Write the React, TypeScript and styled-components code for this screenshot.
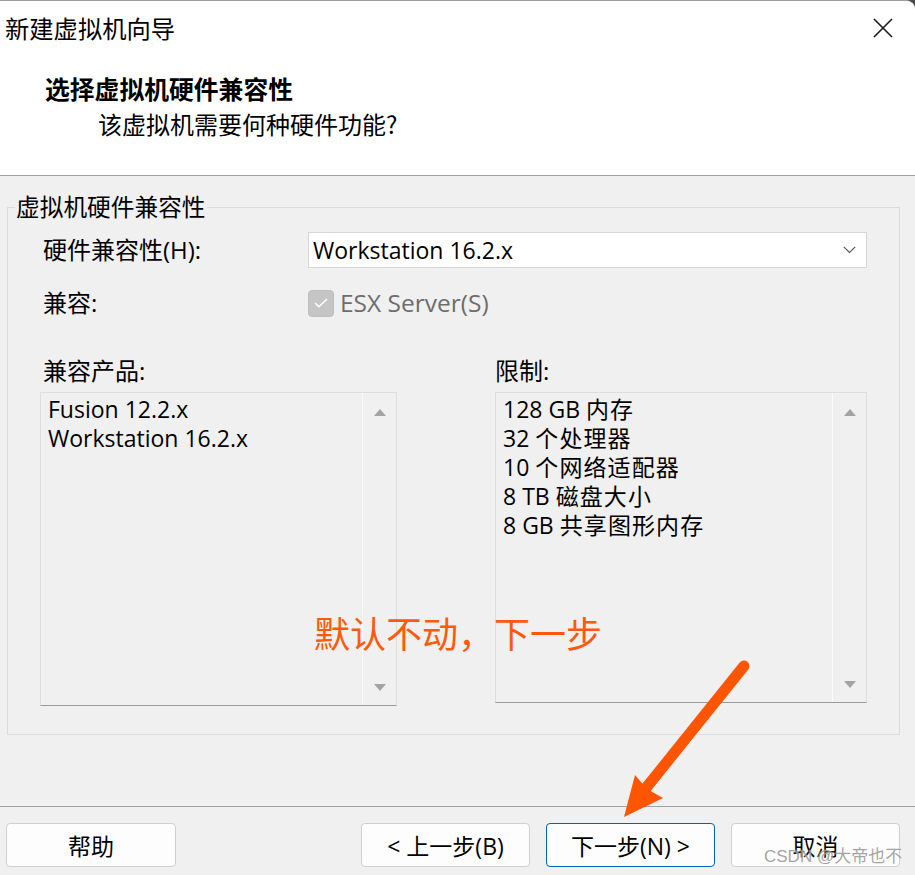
import React from "react";
import styled, { createGlobalStyle } from "styled-components";

const GlobalStyle = createGlobalStyle`
  html, body {
    margin: 0;
    padding: 0;
    background: #4a4a4a;
  }
  * {
    box-sizing: border-box;
  }
`;

const FONT = `"Open Sans", "Noto Sans CJK SC", sans-serif`;

const Dialog = styled.div`
  position: relative;
  width: 915px;
  height: 875px;
  display: flex;
  flex-direction: column;
  background: #f0f0f0;
  border-top: 1px solid #9c9c9c;
  border-top-right-radius: 9px;
  overflow: hidden;
  font-family: ${FONT};
  color: #000;
`;

const Header = styled.header`
  height: 175px;
  flex-shrink: 0;
  background: #fff;
  border-bottom: 1px solid #a0a0a0;
`;

const TitleBar = styled.div`
  height: 54px;
  display: flex;
  align-items: center;
  justify-content: space-between;
  padding: 0 22px 0 5px;
`;

const Title = styled.div`
  font-family: "Noto Sans CJK SC", sans-serif;
  font-size: 24.3px;
  line-height: 30px;
`;

const CloseButton = styled.button`
  width: 20px;
  height: 20px;
  padding: 0;
  border: none;
  background: none;
  display: flex;
`;

const Heading = styled.div`
  margin-top: 17px;
  padding-left: 45px;
  font-family: "Noto Sans CJK SC", sans-serif;
  font-size: 24.8px;
  font-weight: 700;
  line-height: 32px;
`;

const SubHeading = styled.div`
  margin-top: 4px;
  padding-left: 98px;
  font-family: "Noto Sans CJK SC", sans-serif;
  font-size: 24px;
  line-height: 32px;
`;

const Body = styled.main`
  flex: 1;
  padding: 16px 15px 0 7px;
`;

const GroupBox = styled.fieldset`
  margin: 0;
  padding: 0;
  min-width: 0;
  border: 1px solid #dcdcdc;
`;

const Legend = styled.legend`
  margin-left: 7px;
  padding: 0 1px;
  font-size: 23.7px;
  line-height: 30px;
`;

const GroupContent = styled.div`
  padding: 10px 32px 28px 35px;
`;

const Row = styled.div<{ $top: number; $height: number }>`
  display: grid;
  grid-template-columns: 265px 1fr;
  align-items: center;
  margin-top: ${(p) => p.$top}px;
  height: ${(p) => p.$height}px;
`;

const Label = styled.span`
  font-size: 24px;
  line-height: 30px;
`;

const Select = styled.div`
  height: 36px;
  display: flex;
  align-items: center;
  justify-content: space-between;
  padding: 0 10px 0 4px;
  background: #fff;
  border: 1px solid #d6d6d6;
  font-size: 23px;
`;

const CheckRow = styled.div`
  display: flex;
  align-items: center;
  gap: 6px;
`;

const CheckBox = styled.span`
  width: 26px;
  height: 27px;
  border-radius: 4px;
  background: #c5c5c5;
  border: 1px solid #bebebe;
  display: flex;
  align-items: center;
  justify-content: center;
`;

const DisabledText = styled.span`
  font-size: 24.5px;
  line-height: 30px;
  color: #6d6d6d;
`;

const Lists = styled.div`
  display: grid;
  grid-template-columns: 357px 372px;
  column-gap: 98px;
  margin: 38px 0 0 -3px;
`;

const ListColumn = styled.div`
  display: flex;
  flex-direction: column;
  gap: 6px;
`;

const ColumnLabel = styled(Label)<{ $indent: number }>`
  padding-left: ${(p) => p.$indent}px;
`;

const ListBox = styled.div<{ $height: number }>`
  height: ${(p) => p.$height}px;
  display: flex;
  border: 1px solid #dedede;
  border-bottom-color: #9a9a9a;
  background: #f0f0f0;
`;

const ListItems = styled.div`
  flex: 1;
  padding: 2px 7px;
  font-size: 23px;
  line-height: 29px;
`;

const ItemLine = styled.div`
  height: 29px;
  white-space: nowrap;
`;

const CjkPart = styled.span`
  letter-spacing: 1.1px;
`;

const ScrollBar = styled.div`
  width: 34px;
  border-left: 1px solid #fbfbfb;
  display: flex;
  flex-direction: column;
  align-items: center;
  justify-content: space-between;
  padding: 16px 0 14px;
`;

const Arrow = styled.span<{ $down?: boolean }>`
  width: 0;
  height: 0;
  border-left: 6px solid transparent;
  border-right: 6px solid transparent;
  ${(p) =>
    p.$down
      ? "border-top: 7px solid #a3a3a3;"
      : "border-bottom: 7px solid #a3a3a3;"}
`;

const Footer = styled.footer`
  height: 69px;
  flex-shrink: 0;
  display: flex;
  align-items: flex-start;
  gap: 16px;
  padding: 16px 15px 0 6px;
  border-top: 1px solid #a0a0a0;
`;

const Spacer = styled.div`
  flex: 1;
`;

const Button = styled.button<{ $primary?: boolean; $width: number }>`
  width: ${(p) => p.$width}px;
  height: 44px;
  padding: 0;
  background: #fdfdfd;
  border: 1px solid ${(p) => (p.$primary ? "#0063b8" : "#d0d0d0")};
  border-radius: 4px;
  font-family: ${FONT};
  font-size: 23px;
  color: #000;
`;

const Annotation = styled.div`
  position: absolute;
  left: 314px;
  top: 610px;
  font-family: "Noto Sans CJK SC", sans-serif;
  font-size: 36px;
  line-height: 42px;
  color: #ff5a0a;
  white-space: nowrap;
`;

const ArrowOverlay = styled.svg`
  position: absolute;
  left: 0;
  top: 0;
  pointer-events: none;
`;

const Watermark = styled.div`
  position: absolute;
  left: 764px;
  top: 845px;
  font-family: "Liberation Sans", "Noto Sans CJK SC", sans-serif;
  font-size: 17px;
  line-height: 22px;
  color: rgba(140, 140, 140, 0.8);
  text-shadow: 0 0 2px rgba(255, 255, 255, 0.9);
  white-space: nowrap;
`;

const products = ["Fusion 12.2.x", "Workstation 16.2.x"];
const limits = [
  { amount: "128 GB", what: "内存" },
  { amount: "32", what: "个处理器" },
  { amount: "10", what: "个网络适配器" },
  { amount: "8 TB", what: "磁盘大小" },
  { amount: "8 GB", what: "共享图形内存" },
];

export default function App() {
  return (
    <>
      <GlobalStyle />
      <Dialog>
        <Header>
          <TitleBar>
            <Title>新建虚拟机向导</Title>
            <CloseButton aria-label="关闭">
              <svg width="20" height="20" viewBox="0 0 20 20">
                <path d="M1 1 L19 19 M19 1 L1 19" stroke="#1a1a1a" strokeWidth="1.6" />
              </svg>
            </CloseButton>
          </TitleBar>
          <Heading>选择虚拟机硬件兼容性</Heading>
          <SubHeading>该虚拟机需要何种硬件功能?</SubHeading>
        </Header>

        <Body>
          <GroupBox>
            <Legend>虚拟机硬件兼容性</Legend>
            <GroupContent>
              <Row $top={0} $height={36}>
                <Label>硬件兼容性(H):</Label>
                <Select>
                  <span>Workstation 16.2.x</span>
                  <svg width="13" height="8" viewBox="0 0 13 8">
                    <path d="M0.8 0.8 L6.5 6.5 L12.2 0.8" fill="none" stroke="#5a5a5a" strokeWidth="1.2" />
                  </svg>
                </Select>
              </Row>
              <Row $top={20} $height={30}>
                <Label>兼容:</Label>
                <CheckRow>
                  <CheckBox>
                    <svg width="14" height="10" viewBox="0 0 14 10">
                      <path d="M1 5 L5 8.8 L13 1" fill="none" stroke="#fff" strokeWidth="1.5" />
                    </svg>
                  </CheckBox>
                  <DisabledText>ESX Server(S)</DisabledText>
                </CheckRow>
              </Row>

              <Lists>
                <ListColumn>
                  <ColumnLabel $indent={3}>兼容产品:</ColumnLabel>
                  <ListBox $height={314}>
                    <ListItems>
                      {products.map((p) => (
                        <ItemLine key={p}>{p}</ItemLine>
                      ))}
                    </ListItems>
                    <ScrollBar>
                      <Arrow />
                      <Arrow $down />
                    </ScrollBar>
                  </ListBox>
                </ListColumn>
                <ListColumn>
                  <ColumnLabel $indent={0}>限制:</ColumnLabel>
                  <ListBox $height={311}>
                    <ListItems>
                      {limits.map((l) => (
                        <ItemLine key={l.what + l.amount}>
                          {l.amount} <CjkPart>{l.what}</CjkPart>
                        </ItemLine>
                      ))}
                    </ListItems>
                    <ScrollBar>
                      <Arrow />
                      <Arrow $down />
                    </ScrollBar>
                  </ListBox>
                </ListColumn>
              </Lists>
            </GroupContent>
          </GroupBox>
        </Body>

        <Footer>
          <Button $width={170}>帮助</Button>
          <Spacer />
          <Button $width={169}>&lt; 上一步(B)</Button>
          <Button $width={169} $primary>
            下一步(N) &gt;
          </Button>
          <Button $width={169}>取消</Button>
        </Footer>

        <Annotation>默认不动，下一步</Annotation>
        <ArrowOverlay width="915" height="875" viewBox="0 0 915 875">
          <path d="M744 665 L646 787" stroke="#ff5500" strokeWidth="11" strokeLinecap="round" />
          <polygon points="624,816 635,774 647,788 663,797" fill="#ff5500" />
        </ArrowOverlay>
        <Watermark>CSDN @大帝也不</Watermark>
      </Dialog>
    </>
  );
}
